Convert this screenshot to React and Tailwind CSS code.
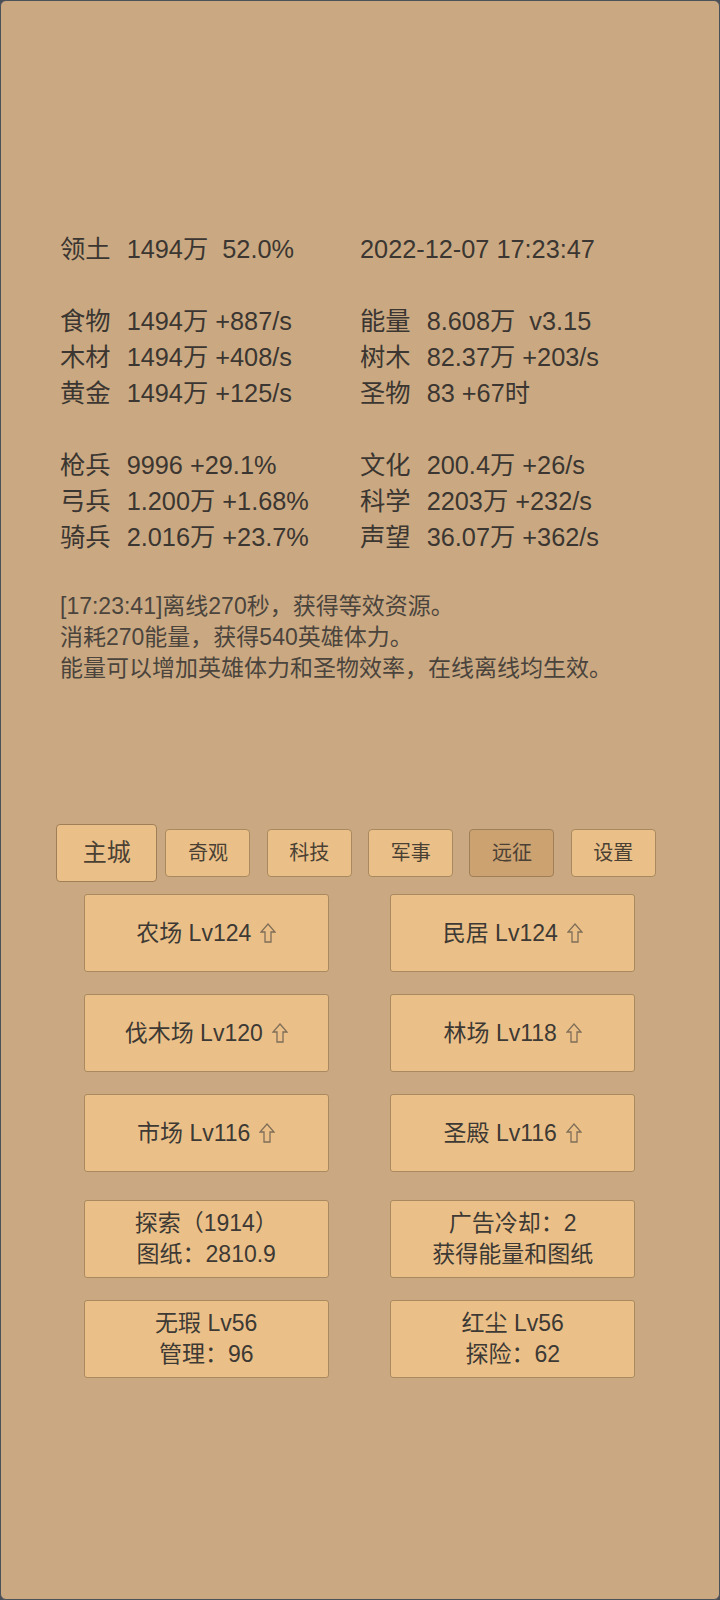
import React from "react";

const FONT = "font-['Liberation_Sans','Noto_Sans_CJK_SC',sans-serif]";

function Arrow() {
  return (
    <svg width="16" height="20" viewBox="0 0 16 20" className="inline-block ml-[9px] -mt-[3px] align-middle">
      <polygon points="8,1 15,9 11,9 11,19 5,19 5,9 1,9" fill="none" stroke="#7f6e58" strokeWidth="1.3" strokeLinejoin="miter" />
    </svg>
  );
}

const left = [
  ["领土", "1494万  52.0%"],
  null,
  ["食物", "1494万 +887/s"],
  ["木材", "1494万 +408/s"],
  ["黄金", "1494万 +125/s"],
  null,
  ["枪兵", "9996 +29.1%"],
  ["弓兵", "1.200万 +1.68%"],
  ["骑兵", "2.016万 +23.7%"],
];
const right = [
  ["", "2022-12-07 17:23:47"],
  null,
  ["能量", "8.608万  v3.15"],
  ["树木", "82.37万 +203/s"],
  ["圣物", "83 +67时"],
  null,
  ["文化", "200.4万 +26/s"],
  ["科学", "2203万 +232/s"],
  ["声望", "36.07万 +362/s"],
];

const tabs = ["主城", "奇观", "科技", "军事", "远征", "设置"];

function Row({ r }) {
  if (!r) return <div className="h-[36px]" />;
  const [label, rest] = r;
  return (
    <div className="whitespace-pre h-[36px]">
      {label ? <span className="mr-[2px]">{label + "  "}</span> : null}
      {rest}
    </div>
  );
}

function Btn({ children }) {
  return (
    <div className="w-[245px] h-[78px] bg-[#ebc088] border border-[#a88960] rounded-[3px] flex flex-col items-center justify-center text-[23px] leading-[31px] text-[#3d3934]">
      {children}
    </div>
  );
}

export default function App() {
  return (
    <div className={`w-[720px] h-[1600px] bg-[#4a4f57] ${FONT}`}>
      <div className="w-full h-full bg-[#caa982] border border-[#4b5159] rounded-[6px] pt-[230px]">
        <div className="pl-[59px] grid grid-cols-[300px_1fr] text-[25.3px] leading-[36px] text-[#3b3631]">
          <div>
            {left.map((r, i) => (
              <Row key={i} r={r} />
            ))}
          </div>
          <div>
            {right.map((r, i) => (
              <Row key={i} r={r} />
            ))}
          </div>
        </div>

        <div className="pl-[59px] mt-[36px] text-[23px] leading-[31px] text-[#4a443d]">
          <div>[17:23:41]离线270秒，获得等效资源。</div>
          <div>消耗270能量，获得540英雄体力。</div>
          <div>能量可以增加英雄体力和圣物效率，在线离线均生效。</div>
        </div>

        <div className="w-[608px] mx-auto mt-[140px] flex h-[58px]">
          {tabs.map((t, i) => (
            <div key={t} className="flex-1 flex items-center justify-center">
              {i === 0 ? (
                <div className="w-full h-[58px] bg-[#ebc088] border border-[#9e7f58] rounded-[4px] flex items-center justify-center text-[24px] text-[#4a4034]">
                  {t}
                </div>
              ) : (
                <div
                  className={`w-[85px] h-[48px] border rounded-[4px] flex items-center justify-center text-[20px] text-[#4a4034] ${
                    t === "远征" ? "bg-[#cda271] border-[#9e7f58]" : "bg-[#ebc088] border-[#a88960]"
                  }`}
                >
                  {t}
                </div>
              )}
            </div>
          ))}
        </div>

        <div className="w-[613px] ml-[52px] mt-[12px] grid grid-cols-2 justify-items-center gap-y-[22px]">
          <Btn><div>农场 Lv124<Arrow /></div></Btn>
          <Btn><div>民居 Lv124<Arrow /></div></Btn>
          <Btn><div>伐木场 Lv120<Arrow /></div></Btn>
          <Btn><div>林场 Lv118<Arrow /></div></Btn>
          <Btn><div>市场 Lv116<Arrow /></div></Btn>
          <Btn><div>圣殿 Lv116<Arrow /></div></Btn>
          <div className="mt-[6px]">
            <Btn>
              <div>探索（1914）</div>
              <div>图纸：2810.9</div>
            </Btn>
          </div>
          <div className="mt-[6px]">
            <Btn>
              <div>广告冷却：2</div>
              <div>获得能量和图纸</div>
            </Btn>
          </div>
          <Btn>
            <div>无瑕 Lv56</div>
            <div>管理：96</div>
          </Btn>
          <Btn>
            <div>红尘 Lv56</div>
            <div>探险：62</div>
          </Btn>
        </div>
      </div>
    </div>
  );
}
